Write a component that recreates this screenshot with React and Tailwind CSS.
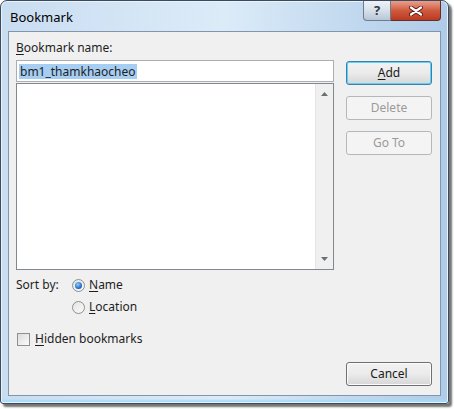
import React from 'react'

const font = { fontFamily: '"Noto Sans", "Open Sans", sans-serif' }

function Btn({ children, def, disabled }) {
  return (
    <div
      className={
        'h-[24px] w-[86px] rounded-[3px] border flex items-center justify-center text-[12px] ' +
        (disabled
          ? 'border-[#b5b8bb] bg-[#f4f4f4] text-[#9a9a9a]'
          : def
          ? 'border-[#3c7fb1] bg-gradient-to-b from-[#f2f2f2] via-[#ebebeb] to-[#d6d6d6] text-[#1a1a1a] shadow-[inset_0_0_0_1px_#5fd1f5]'
          : 'border-[#707070] bg-gradient-to-b from-[#f2f2f2] via-[#ebebeb] to-[#d6d6d6] text-[#1a1a1a] shadow-[inset_0_0_0_1px_#fbfbfb]')
      }
    >
      {children}
    </div>
  )
}

function Radio({ checked, children }) {
  return (
    <div className="flex items-center gap-[4px] h-[22px]">
      <div className="w-[13px] h-[13px] rounded-full border border-[#8e8f8f] bg-gradient-to-br from-[#e4e4e4] to-[#fafafa] flex items-center justify-center">
        {checked && (
          <div className="w-[7px] h-[7px] rounded-full bg-[radial-gradient(circle_at_40%_35%,#8cd0ff,#1a5fb8_70%)]" />
        )}
      </div>
      <span>{children}</span>
    </div>
  )
}

export default function App() {
  return (
    <div className="w-[454px] h-[409px] bg-white overflow-hidden text-[#1e1e1e]" style={font}>
      <div className="w-[449px] h-[404px] rounded-t-[7px] rounded-b-[3px] border border-[#3b4a5c] bg-gradient-to-r from-[#c9ddf1] via-[#dcebf8] to-[#aecbe8] shadow-[3px_3px_2px_rgba(0,0,0,0.55),inset_0_0_0_1px_#e9f3fb,inset_0_-3px_2px_#a6dcf7] flex flex-col">
        {/* title bar */}
        <div className="h-[30px] flex items-start">
          <div className="flex-1 pl-[9px] pt-[7px] text-[13px] text-black">Bookmark</div>
          <div className="flex mr-[7px]">
            <div className="w-[28px] h-[20px] rounded-bl-[4px] border border-t-0 border-[#6d7d8f] bg-gradient-to-b from-[#eef3f8] via-[#d7e0ea] to-[#b8c6d5] flex items-center justify-center text-[13px] font-bold text-[#2e3a46]">
              ?
            </div>
            <div className="w-[50px] h-[20px] rounded-br-[4px] border border-t-0 border-l-0 border-[#6b2a22] bg-gradient-to-b from-[#e8a08e] via-[#d05a3e] to-[#b83a22] flex items-center justify-center">
              <svg width="16" height="10" viewBox="0 0 16 10">
                <path d="M3 1.5 L13 8.5 M13 1.5 L3 8.5" stroke="#5a1a12" strokeWidth="4" strokeLinecap="round" />
                <path d="M3 1.5 L13 8.5 M13 1.5 L3 8.5" stroke="#ffffff" strokeWidth="2.2" strokeLinecap="round" />
              </svg>
            </div>
          </div>
        </div>
        {/* client */}
        <div className="flex-1 mx-[7px] mb-[7px] border border-[#8196ad] bg-[#f0f0f0] pl-[7px] pr-[9px] pt-[8px] pb-[9px] text-[12px] grid grid-cols-[318px_86px] gap-x-[12px] grid-rows-[auto_1fr]">
          <div className="flex flex-col">
            <div className="h-[15px] leading-[15px]">
              <span className="underline underline-offset-2">B</span>ookmark name:
            </div>
            <div className="mt-[5px] h-[22px] border border-[#abadb3] bg-white flex items-center pl-[2px]">
              <span className="bg-[#a6cdf2] px-[1px] leading-[15px]">bm1_thamkhaocheo</span>
            </div>
            <div className="mt-[1px] h-[187px] border border-[#828790] bg-white flex justify-end">
              <div className="w-[18px] bg-[#f0f0f0] border-l border-[#e4e4e4] flex flex-col items-center justify-between py-[8px]">
                <svg width="7" height="4" viewBox="0 0 7 4"><path d="M0 4 L3.5 0 L7 4Z" fill="#6e6e6e" /></svg>
                <svg width="7" height="4" viewBox="0 0 7 4"><path d="M0 0 L3.5 4 L7 0Z" fill="#6e6e6e" /></svg>
              </div>
            </div>
          </div>
          <div className="flex flex-col gap-[11px] pt-[21px]">
            <Btn def>
              <span><span className="underline underline-offset-2">A</span>dd</span>
            </Btn>
            <Btn disabled>Delete</Btn>
            <Btn disabled>Go To</Btn>
          </div>
          <div className="flex flex-col pt-[4px]">
            <div className="flex">
              <div className="w-[56px] h-[22px] flex items-center">Sort by:</div>
              <div className="flex flex-col">
                <Radio checked>
                  <span className="underline underline-offset-2">N</span>ame
                </Radio>
                <Radio>
                  <span className="underline underline-offset-2">L</span>ocation
                </Radio>
              </div>
            </div>
            <div className="flex items-center gap-[5px] mt-[10px] pl-[1px] h-[22px]">
              <div className="w-[13px] h-[13px] border border-[#8e8f8f] bg-gradient-to-br from-[#dcdcdc] to-[#fbfbfb]" />
              <span>
                <span className="underline underline-offset-2">H</span>idden bookmarks
              </span>
            </div>
          </div>
          <div className="flex flex-col justify-end">
            <Btn>Cancel</Btn>
          </div>
        </div>
      </div>
    </div>
  )
}
